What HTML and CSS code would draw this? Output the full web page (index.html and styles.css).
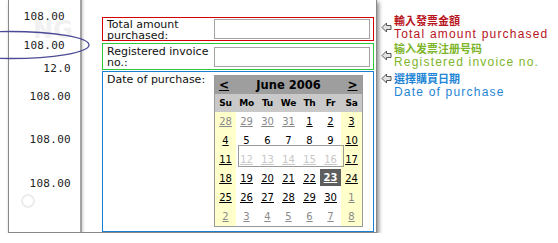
FILE: index.html
```html
<!DOCTYPE html>
<html lang="en">
<head>
    <meta charset="UTF-8">
    <title>Purchase details</title>
    <link rel="stylesheet" href="styles.css">
</head>
<body>
<div class="page">
    <!-- the window with the amount list and the form -->
    <div class="window">
        <div class="amounts">
            <div class="amt a1">108.00</div>
            <div class="amt a2">108.00</div>
            <div class="amt">12.0</div>
            <div class="amt">108.00</div>
            <div class="amt">108.00</div>
            <div class="amt">108.00</div>
            <span class="mark-text">NG</span>
            <span class="mark-ring"></span>
        </div>

        <div class="form">
            <div class="field field-red">
                <div class="label">Total amount purchased:</div>
                <input class="text-input" type="text">
            </div>
            <div class="field field-green">
                <div class="label">Registered invoice no.:</div>
                <input class="text-input" type="text">
            </div>
            <div class="field field-blue">
                <div class="label">Date of purchase:</div>
                <div class="cal-wrap">
                    <table class="cal">
                        <colgroup>
                            <col class="col"><col class="col"><col class="col"><col class="col"><col class="col"><col class="col"><col class="col">
                        </colgroup>
                        <tr class="cal-head">
                            <td class="nav nav-prev"><a href="#">&lt;</a></td>
                            <td colspan="5" class="month">June 2006</td>
                            <td class="nav nav-next"><a href="#">&gt;</a></td>
                        </tr>
                        <tr class="cal-days">
                            <td>Su</td><td>Mo</td><td>Tu</td><td>We</td><td>Th</td><td>Fr</td><td>Sa</td>
                        </tr>
                        <tr>
                            <td class="we other"><a href="#">28</a></td>
                            <td class="other"><a href="#">29</a></td>
                            <td class="other"><a href="#">30</a></td>
                            <td class="other"><a href="#">31</a></td>
                            <td><a href="#">1</a></td>
                            <td><a href="#">2</a></td>
                            <td class="we"><a href="#">3</a></td>
                        </tr>
                        <tr>
                            <td class="we"><a href="#">4</a></td>
                            <td>5</td><td>6</td><td>7</td><td>8</td><td>9</td>
                            <td class="we"><a href="#">10</a></td>
                        </tr>
                        <tr>
                            <td class="we"><a href="#">11</a></td>
                            <td class="off"><a href="#">12</a></td>
                            <td class="off"><a href="#">13</a></td>
                            <td class="off"><a href="#">14</a></td>
                            <td class="off"><a href="#">15</a></td>
                            <td class="off"><a href="#">16</a></td>
                            <td class="we"><a href="#">17</a></td>
                        </tr>
                        <tr>
                            <td class="we"><a href="#">18</a></td>
                            <td><a href="#">19</a></td>
                            <td><a href="#">20</a></td>
                            <td><a href="#">21</a></td>
                            <td><a href="#">22</a></td>
                            <td><a href="#" class="sel">23</a></td>
                            <td class="we"><a href="#">24</a></td>
                        </tr>
                        <tr>
                            <td class="we"><a href="#">25</a></td>
                            <td><a href="#">26</a></td>
                            <td><a href="#">27</a></td>
                            <td><a href="#">28</a></td>
                            <td><a href="#">29</a></td>
                            <td><a href="#">30</a></td>
                            <td class="we other"><a href="#">1</a></td>
                        </tr>
                        <tr>
                            <td class="we other"><a href="#">2</a></td>
                            <td class="other"><a href="#">3</a></td>
                            <td class="other"><a href="#">4</a></td>
                            <td class="other"><a href="#">5</a></td>
                            <td class="other"><a href="#">6</a></td>
                            <td class="other"><a href="#">7</a></td>
                            <td class="we other"><a href="#">8</a></td>
                        </tr>
                    </table>
                    <!-- frame over the greyed-out days -->
                    <div class="range-box"></div>
                </div>
            </div>
        </div>
    </div>

    <!-- notes to the right -->
    <div class="notes">
        <div class="note note-red">
            <svg class="arrow" width="11" height="11" viewBox="0 0 11 11"><polygon points="1,5.5 5.5,1 5.5,3.5 10,3.5 10,7.5 5.5,7.5 5.5,10" fill="#e4e4e4" stroke="#555" stroke-width="1"/></svg>
            <div>
                <div class="zh">輸入發票金額</div>
                <div class="en">Total amount purchased</div>
            </div>
        </div>
        <div class="note note-green">
            <svg class="arrow" width="11" height="11" viewBox="0 0 11 11"><polygon points="1,5.5 5.5,1 5.5,3.5 10,3.5 10,7.5 5.5,7.5 5.5,10" fill="#e4e4e4" stroke="#555" stroke-width="1"/></svg>
            <div>
                <div class="zh zh-sc">输入发票注册号码</div>
                <div class="en">Registered invoice no.</div>
            </div>
        </div>
        <div class="note note-blue">
            <svg class="arrow" width="11" height="11" viewBox="0 0 11 11"><polygon points="1,5.5 5.5,1 5.5,3.5 10,3.5 10,7.5 5.5,7.5 5.5,10" fill="#e4e4e4" stroke="#555" stroke-width="1"/></svg>
            <div>
                <div class="zh">選擇購買日期</div>
                <div class="en">Date of purchase</div>
            </div>
        </div>
    </div>

    <!-- hand drawn ring round the second amount -->
    <svg class="ring" width="95" height="36" viewBox="0 0 95 36">
        <ellipse cx="10" cy="17" rx="79" ry="13.5" fill="none" stroke="#4b4b95" stroke-width="1.3"/>
    </svg>
</div>
</body>
</html>
```

FILE: styles.css
```css
/* Page */
body {
    margin: 0;
    background-color: #fff;
}

.page {
    position: relative;
    display: flex;
    align-items: flex-start;
}

/* Window frame */
.window {
    margin-left: 8px;
    display: flex;
    height: 232px;
    border: 1px solid #888;
    border-top: none;
    background-color: #fff;
    box-shadow: 2px 2px 4px rgba(0, 0, 0, 0.45);
}

/* Left column with the amounts */
.amounts {
    position: relative;
    width: 71px;
    padding-top: 10px;
    border-right: 2px solid #a2a2a2;
    display: grid;
    grid-template-rows: 29px 23px 28px 43px 44px auto;
    font: 11px/14px "DejaVu Sans Mono", monospace;
    color: #222;
}

.amt {
    position: relative;
    z-index: 1;
    text-align: right;
    padding-right: 9px;
    letter-spacing: 0.3px;
}

.a1, .a2 {
    padding-right: 15px;
}

.mark-text {
    position: absolute;
    left: 24px;
    top: 16px;
    font: bold 24px "DejaVu Sans", sans-serif;
    color: #f1f1f1;
}

.mark-ring {
    position: absolute;
    left: 12px;
    top: 194px;
    width: 10px;
    height: 10px;
    border: 2px solid #ececec;
    border-radius: 50%;
}

/* Form side */
.form {
    width: 294px;
    box-sizing: border-box;
    padding: 17px 2px 0 20px;
    box-shadow: inset 3px 0 3px -2px rgba(0, 0, 0, 0.2);
}

.field {
    display: flex;
    align-items: flex-start;
    box-sizing: border-box;
    border: 1px solid;
}

.field-red {
    border-color: #d40000;
    height: 24px;
}

.field-green {
    border-color: #2fc83a;
    height: 27px;
    margin-top: 2px;
}

.field-blue {
    border-color: #1a7fd0;
    height: 161px;
    margin-top: 1px;
}

.label {
    flex: none;
    width: 111px;
    box-sizing: border-box;
    padding: 1px 0 0 4px;
    font: 11px/11px "DejaVu Sans", sans-serif;
    color: #111;
}

.field-green .label,
.field-blue .label {
    padding-top: 2px;
}

.text-input {
    width: 156px;
    height: 20px;
    box-sizing: border-box;
    margin: 1px 0 0;
    padding: 0;
    border: 1px solid #a3a3a3;
    background-color: #fff;
}

.field-green .text-input {
    margin-top: 3px;
}

/* Calendar */
.cal-wrap {
    position: relative;
    margin-top: 3px;
}

.cal {
    width: 149px;
    table-layout: fixed;
    border-collapse: separate;
    border-spacing: 0;
    border: 1px solid #9a9a9a;
    font: 10px "DejaVu Sans", sans-serif;
    text-align: center;
    background-color: #fff;
}

.cal .col {
    width: 21px;
}

.cal td {
    height: 19px;
    padding: 0;
    white-space: nowrap;
}

.cal a {
    color: #000;
}

.cal-head td {
    height: 18px;
    background-color: #9e9e9e;
    font-weight: bold;
}

.month {
    font-size: 11.5px;
}

.nav-prev {
    text-align: left;
    padding-left: 4px !important;
    font-size: 12px;
}

.nav-next {
    font-size: 12px;
    padding-left: 2px !important;
}

.cal-days td {
    height: 18px;
    background-color: #c9c9c9;
    font-weight: bold;
    font-size: 9px;
    letter-spacing: -0.2px;
}

.cal td.we {
    background-color: #ffffcc;
}

.cal .other a {
    color: #8a8a8a;
}

.cal .off a {
    color: #c8c8c8;
}

.cal tr:nth-child(n+4) td:not([class]) {
    text-decoration: underline;
}

.cal a.sel {
    display: block;
    height: 17px;
    line-height: 17px;
    margin-bottom: 2px;
    background-color: #5e5e5e;
    color: #fff;
    font-weight: bold;
}

.range-box {
    position: absolute;
    left: 24px;
    top: 70px;
    width: 106px;
    height: 22px;
    box-sizing: border-box;
    border: 1px solid #9a9a9a;
    pointer-events: none;
}

/* Notes on the right */
.notes {
    margin-left: 4px;
    padding-top: 13px;
}

.note {
    display: flex;
    align-items: flex-start;
}

.note-blue {
    margin-top: 2px;
}

.arrow {
    flex: none;
    margin: 9px 2px 0 0;
}

.note-blue .arrow {
    margin-top: 2px;
}

.zh {
    font: bold 11px/14px "Noto Sans CJK TC", sans-serif;
}

.zh-sc {
    font-family: "Noto Sans CJK SC", sans-serif;
}

.en {
    font: 12px/14px "Liberation Sans", Arial, sans-serif;
    letter-spacing: 1.2px;
}

.note-red {
    color: #b8141c;
}

.note-green {
    color: #7db52a;
}

.note-blue {
    color: #1f86d6;
}

/* ring */
.ring {
    position: absolute;
    left: 0;
    top: 28px;
    pointer-events: none;
}
```
